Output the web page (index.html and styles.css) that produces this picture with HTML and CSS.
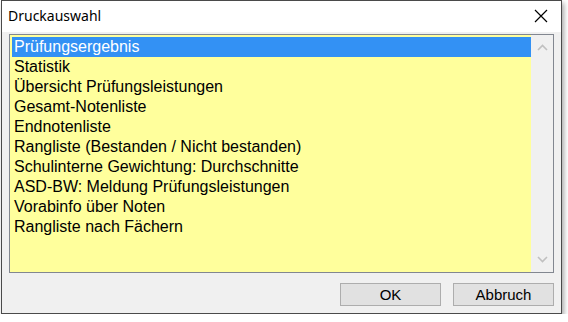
FILE: index.html
```html
<!DOCTYPE html>
<html lang="de">
<head>
  <meta charset="UTF-8">
  <title>Druckauswahl</title>
  <link rel="stylesheet" href="styles.css">
</head>
<body>
  <div class="window">
    <div class="titlebar">
      <span class="title">Druckauswahl</span>
      <svg class="close" width="14" height="14" viewBox="0 0 14 14">
        <path d="M1 1 L13 13 M13 1 L1 13" stroke="#000" stroke-width="1.2" fill="none"/>
      </svg>
    </div>
    <div class="content">
      <div class="listbox">
        <ul class="items">
          <li class="selected">Prüfungsergebnis</li>
          <li>Statistik</li>
          <li>Übersicht Prüfungsleistungen</li>
          <li>Gesamt-Notenliste</li>
          <li>Endnotenliste</li>
          <li>Rangliste (Bestanden / Nicht bestanden)</li>
          <li>Schulinterne Gewichtung: Durchschnitte</li>
          <li>ASD-BW: Meldung Prüfungsleistungen</li>
          <li>Vorabinfo über Noten</li>
          <li>Rangliste nach Fächern</li>
        </ul>
        <div class="scrollbar">
          <svg width="11" height="7" viewBox="0 0 11 7"><path d="M1 6 L5.5 1.5 L10 6" stroke="#c0c0c0" stroke-width="1.6" fill="none"/></svg>
          <svg width="11" height="7" viewBox="0 0 11 7"><path d="M1 1 L5.5 5.5 L10 1" stroke="#c0c0c0" stroke-width="1.6" fill="none"/></svg>
        </div>
      </div>
      <div class="buttons">
        <button class="btn">OK</button>
        <button class="btn">Abbruch</button>
      </div>
    </div>
  </div>
</body>
</html>
```

FILE: styles.css
```css
/* Windows-style print selection dialog */
body {
  margin: 0;
  background-color: #fff;
  font-family: "Liberation Sans", Arial, sans-serif;
}

.window {
  width: 559px;
  height: 312px;
  margin-left: 1px;
  border: 1px solid #4a4a4a;
  background-color: #f0f0f0;
  box-shadow: 2px 3px 5px rgba(0, 0, 0, 0.35);
  display: flex;
  flex-direction: column;
}

.titlebar {
  height: 31px;
  background-color: #fff;
  display: flex;
  align-items: center;
  justify-content: space-between;
  padding: 0 13px 0 6px;
}

.title {
  font-family: "Noto Sans", sans-serif;
  font-size: 14px;
  color: #000;
  margin-top: -2px;
}

.close {
  margin-top: -1px;
}

.content {
  flex: 1;
  padding: 2px 7px 0 7px;
  display: flex;
  flex-direction: column;
}

.listbox {
  height: 237px;
  border: 1px solid #828790;
  background-color: #ffff9c;
  display: flex;
}

.items {
  flex: 1;
  list-style: none;
  margin: 0;
  padding: 2px 0 0 2px;
}

.items li {
  height: 20px;
  line-height: 20px;
  font-size: 16px;
  color: #000;
  padding-left: 2px;
}

.items li.selected {
  background-color: #3391f4;
  color: #fff;
}

.scrollbar {
  width: 22px;
  background-color: #f0f0f0;
  display: flex;
  flex-direction: column;
  justify-content: space-between;
  align-items: center;
  padding: 9px 0 9px 0;
}

.buttons {
  display: flex;
  justify-content: flex-end;
  gap: 12px;
  padding: 10px 0 0 0;
}

.btn {
  width: 101px;
  height: 23px;
  border: 1px solid #adadad;
  background-color: #e1e1e1;
  font-family: "Liberation Sans", Arial, sans-serif;
  font-size: 15px;
  color: #000;
  padding: 0;
}
```
